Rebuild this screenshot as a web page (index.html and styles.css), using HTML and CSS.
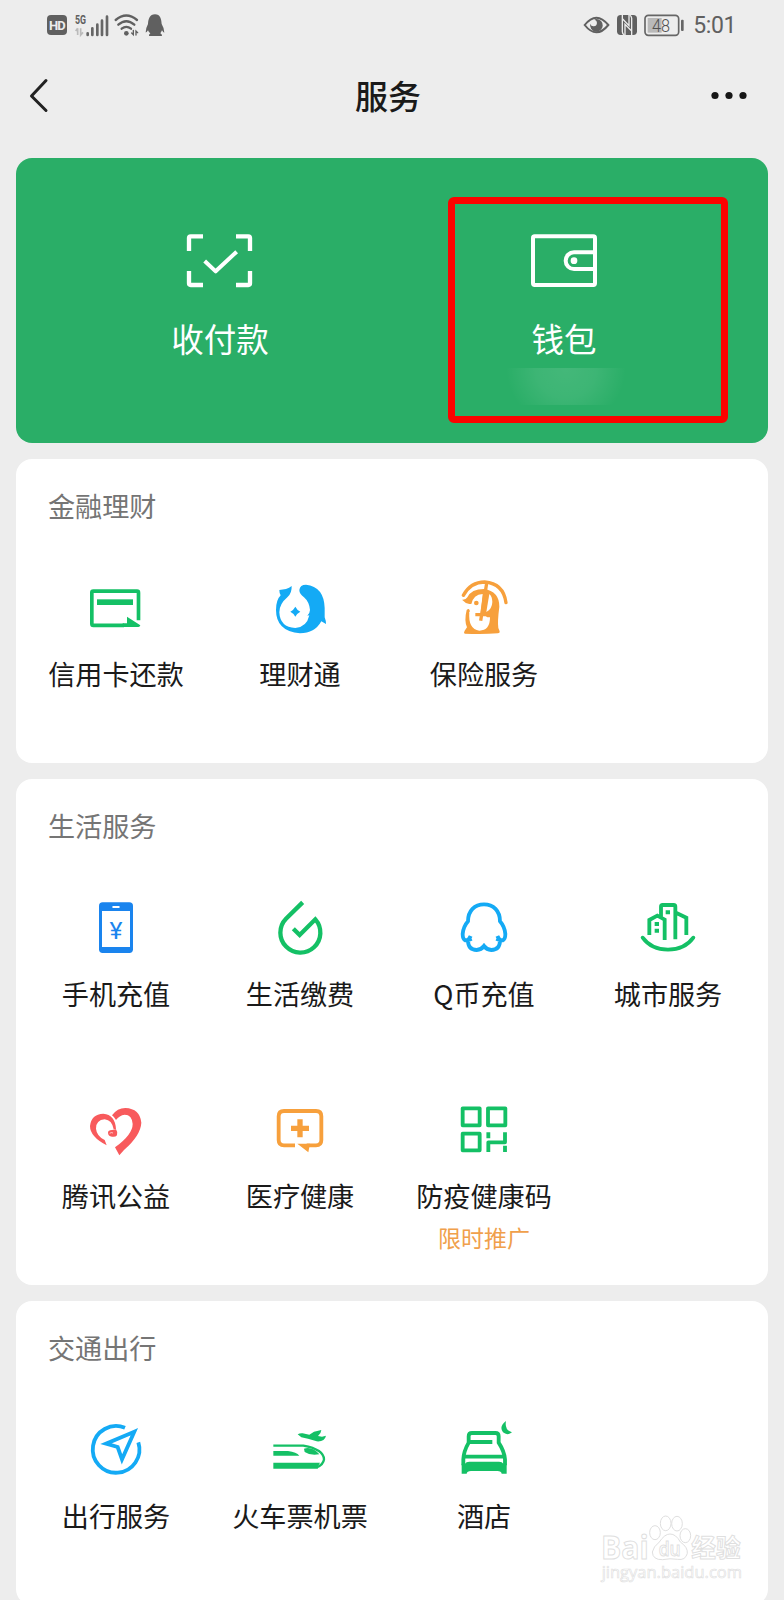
FILE: index.html
```html
<!DOCTYPE html>
<html lang="zh-CN">
<head>
  <meta charset="UTF-8">
  <title>服务</title>
  <link rel="stylesheet" href="styles.css">
</head>
<body>
  <div class="status">
    <div class="status-left">
      <span class="hd">HD</span>
      <svg class="signal" width="34" height="24" viewBox="0 0 102 72">
        <text x="0" y="32" font-size="36" textLength="33" lengthAdjust="spacingAndGlyphs" class="net">5G</text>
        <path d="M8 46 V66 M8 46 L2 54 M17 46 V66 L24 58" stroke="#bbb" stroke-width="5" fill="none"/>
        <path d="M38 61 V66 M52 46 V66 M67 35 V66 M81 23 V66 M96 11 V66" stroke="#666" stroke-width="8" stroke-linecap="round"/>
      </svg>
      <svg class="wifi" width="26" height="24" viewBox="0 0 78 72" fill="none" stroke="#606060" stroke-width="7" stroke-linecap="round">
        <path d="M5 21 Q37 -6 69 21 M13 35 Q37 14 61 35 M23 47 Q37 36 51 47"/>
        <circle cx="37" cy="61" r="7" fill="#606060" stroke="none"/>
        <path d="M58 52 V65 L53 60 M66 66 V54 L71 59" stroke-width="4"/>
      </svg>
      <svg class="qq" width="20" height="24" viewBox="0 0 60 72">
        <path d="M30 4 C46 4 49 18 50 33 Q58 46 58 59 Q55 59 51 52 Q49 57 46 61 Q52 64 51 69 H12 Q11 64 16 61 Q11 58 9 52 Q5 59 2 58 Q2 46 9 33 C10 18 14 4 30 4Z" fill="#606060"/>
      </svg>
    </div>
    <div class="status-right">
      <svg width="27" height="24" viewBox="0 0 81 72">
        <path d="M5 36 Q40 -8 76 36 Q40 80 5 36Z" fill="none" stroke="#606060" stroke-width="6"/>
        <path d="M40 18 A19 19 0 1 1 22 32 A10 10 0 1 0 34 20 Q36 18 40 18Z" fill="#606060"/>
      </svg>
      <svg width="20" height="24" viewBox="0 0 60 72">
        <rect x="0" y="6" width="60" height="60" rx="11" fill="#606060"/>
        <path d="M16 6 V56 Q16 62 22 66 M44 66 V16 Q44 10 38 6" fill="none" stroke="#ededed" stroke-width="4"/>
        <path d="M24 66 V34 L44 54 M36 6 V38 L17 18" fill="none" stroke="#ededed" stroke-width="4"/>
      </svg>
      <svg width="42" height="24" viewBox="0 0 126 72">
        <rect x="3" y="7" width="101" height="60" rx="10" fill="none" stroke="#666" stroke-width="5"/>
        <rect x="11" y="15" width="42" height="44" fill="#b9b9b9"/>
        <rect x="111" y="20" width="8" height="34" rx="3" fill="#666"/>
        <text x="24" y="56" font-size="54" textLength="54" lengthAdjust="spacingAndGlyphs" class="level">48</text>
      </svg>
      <span class="time">5:01</span>
    </div>
  </div>

  <header class="navbar">
    <svg width="20" height="36" viewBox="0 0 20 36" fill="none" stroke="#222" stroke-width="3" stroke-linecap="round" stroke-linejoin="round">
      <path d="M17 3.500 L2.500 19 L17 33.500"/>
    </svg>
    <h1>服务</h1>
    <svg class="more" width="36" height="8" viewBox="0 0 36 8" fill="#161616">
      <circle cx="4" cy="4.500" r="3.600"/><circle cx="18" cy="4.500" r="3.600"/><circle cx="32" cy="4.500" r="3.600"/>
    </svg>
  </header>

  <main class="content">
    <section class="pay">
      <div class="pay-item">
        <svg width="68" height="56" viewBox="0 0 204 168" fill="none" stroke="#fff" stroke-width="13">
          <path d="M9 54 V15 Q9 10 14 10 H51 M150 10 H187 Q192 10 192 15 V54 M192 114 V151 Q192 156 187 156 H150 M51 156 H14 Q9 156 9 151 V114"/>
          <path d="M56 84 L89 115 L152 56" stroke-linejoin="round" stroke-width="12"/>
        </svg>
        <span>收付款</span>
      </div>
      <div class="pay-item">
        <svg width="68" height="56" viewBox="0 0 204 168" fill="none" stroke="#fff" stroke-width="12">
          <rect x="9" y="10" width="186" height="146" rx="5"/>
          <path d="M195 58 H132 A25 25 0 0 0 132 108 H195"/>
          <circle cx="132" cy="83" r="10" fill="#fff" stroke="none"/>
        </svg>
        <span>钱包</span>
        <div class="balance"></div>
      </div>
      <div class="highlight"></div>
    </section>

    <section class="card">
      <h2>金融理财</h2>
      <div class="grid">
        <div class="item">
          <svg class="icon green" viewBox="0 0 168 168">
            <path d="M108 136 H16 Q11.500 136 11.500 131 V38 Q11.500 33.500 16 33.500 H147 Q151.500 33.500 151.500 38 V121" fill="none" stroke="currentColor" stroke-width="11"/>
            <rect x="27" y="58" width="108" height="17"/>
            <path d="M117 110 L157 136 Q156 141 151 141 H104 V130 H117Z"/>
          </svg>
          <span>信用卡还款</span>
        </div>
        <div class="item">
          <svg class="icon blue" viewBox="0 0 168 168">
            <path d="M22 30 L42 27 Q52 24 59 18 Q60 40 46 52 Q22 72 22 97 Q24 142 70 144 Q104 142 112 106 L106 107 Q114 98 114 90 Q112 66 96 52 Q82 42 82 30 Q84 14 102 14 Q156 20 158 84 V112 Q162 122 162 132 L148 124 Q128 160 84 160 Q12 154 12 90 Q12 60 26 46 Q22 40 22 30Z"/>
            <path d="M70 80 Q75 90 85 95 Q75 100 70 110 Q65 100 55 95 Q65 90 70 80Z"/>
          </svg>
          <span>理财通</span>
        </div>
        <div class="item">
          <svg class="icon orange" viewBox="0 0 168 168">
            <path d="M22 46 Q44 6 86 6 Q142 10 150 68" fill="none" stroke="currentColor" stroke-width="10" stroke-linecap="round"/>
            <path d="M18 59 Q30 60 34 52 Q46 27 84 27 Q130 34 130 80 Q124 125 127 144 L131 154 Q132 160 126 160 Q78 164 26 161 Q22 158 26 152 L33 142 Q24 122 32 90 Q38 84 41 90 L40 72 Q28 70 18 59Z"/>
            <path d="M30 72 L46 72 Q52 44 80 42 L74 100 H41 V90 Q38 84 31 88Z" fill="#fff"/>
            <path d="M40 96 L76 98 L94 112 H102 Q102 152 70 152 Q36 148 40 96Z" fill="#fff"/>
            <path d="M100 42 L91 96 Q108 88 109 66 Q109 50 100 42Z" fill="#fff"/>
            <path d="M92 10 L74 122 M58 104 H92" fill="none" stroke="currentColor" stroke-width="10"/>
            <circle cx="61" cy="69" r="7"/>
          </svg>
          <span>保险服务</span>
        </div>
      </div>
    </section>

    <section class="card">
      <h2>生活服务</h2>
      <div class="grid">
        <div class="item">
          <svg class="icon phone" viewBox="0 0 168 168">
            <rect x="33" y="7" width="102" height="152" rx="11"/>
            <rect x="42" y="33" width="84" height="108" fill="#fff"/>
            <rect x="73" y="18" width="22" height="6" rx="2" fill="#fff"/>
            <text x="84" y="116" font-size="74" text-anchor="middle" class="yen">¥</text>
          </svg>
          <span>手机充值</span>
        </div>
        <div class="item">
          <svg class="icon green" viewBox="0 0 168 168">
            <path d="M92 7 L42 56 A60 60 0 1 0 130 58 L83 105 L64 86" fill="none" stroke="currentColor" stroke-width="13"/>
          </svg>
          <span>生活缴费</span>
        </div>
        <div class="item">
          <svg class="icon blue" viewBox="0 0 168 168" fill="none">
            <path class="line" d="M44 108 Q38 122 28 121 Q20 118 20 102 Q22 80 36 64 C36 32 56 13 84 13 C112 13 132 32 132 64 Q146 80 148 102 Q148 118 140 121 Q130 122 124 108 M47 116 L36 121 Q36 150 62 150 Q76 149 84 138 Q92 149 106 150 Q132 150 132 121 L121 116"/>
          </svg>
          <span>Q币充值</span>
        </div>
        <div class="item">
          <svg class="icon green" viewBox="0 0 168 168">
            <path class="line" d="M8 113 Q34 149 84 149 Q134 149 160 113" stroke-linecap="round"/>
            <path class="line" d="M28 105 V60 L52 47 L74 59 V120 M63 50 V20 Q63 15 68 15 H101 Q106 15 106 20 V118 M108 38 L139 53 V105"/>
            <path d="M77 31 H90 V43 H77Z M44 66 H57 V78 H44Z M44 86 H57 V98 H44Z"/>
          </svg>
          <span>城市服务</span>
        </div>
        <div class="item">
          <svg class="icon red" viewBox="0 0 168 168">
            <path d="M56 130 Q6 104 6 72 Q10 36 46 35 Q82 38 84 82 L77 82 Q72 54 50 52 Q24 54 24 80 Q26 102 50 114Z"/>
            <path d="M72 40 Q88 18 112 18 Q156 20 160 62 Q158 100 108 144 L94 160 L81 136 Q134 98 134 66 Q132 38 110 38 Q94 40 84 54 Q80 46 72 40Z"/>
            <path d="M60 92 Q60 84 72 84 L84 82 Q90 90 87 100 Q82 106 72 104 Q60 102 60 92Z"/>
            <path d="M65 94 Q70 90 75 93" fill="none" stroke="#fff" stroke-width="2"/>
          </svg>
          <span>腾讯公益</span>
        </div>
        <div class="item">
          <svg class="icon orange" viewBox="0 0 168 168">
            <path class="line" d="M69 130 H36 Q20 130 20 114 V43 Q20 27 36 27 H132 Q148 27 148 43 V114 Q148 130 132 130 H104"/>
            <path d="M76 125 H114 L109 151Z M57 71 H76 V52 H92 V71 H111 V87 H92 V106 H76 V87 H57Z"/>
          </svg>
          <span>医疗健康</span>
        </div>
        <div class="item">
          <svg class="icon green" viewBox="0 0 168 168">
            <g class="line" stroke-linejoin="round">
              <rect x="20" y="19" width="51" height="51"/>
              <rect x="96" y="19" width="52" height="51"/>
              <rect x="20" y="95" width="51" height="50"/>
              <path d="M97 91 V109 M97 150 V121 H147 V91 M147 131 V150"/>
            </g>
          </svg>
          <span>防疫健康码</span>
          <em>限时推广</em>
        </div>
      </div>
    </section>

    <section class="card">
      <h2>交通出行</h2>
      <div class="grid">
        <div class="item">
          <svg class="icon blue" viewBox="0 0 168 168">
            <path class="line" d="M111 17.500 A70 70 0 1 0 151 61 M139 29 L54 65 L89 75 L102 112Z"/>
          </svg>
          <span>出行服务</span>
        </div>
        <div class="item">
          <svg class="icon green" viewBox="0 0 168 168">
            <path d="M4 71 H94 Q155 82 156 112 Q154 128 134 136" fill="none" stroke="currentColor" stroke-width="7"/>
            <path d="M4 122 H144 Q138 130 137 140 H4Z M4 87 H48 Q74 90 82 101 H4Z M96 80 Q120 72 142 97 Q116 102 98 90Z"/>
            <path d="M77 37 Q84 33 92 34 L112 38 L126 29 L148 24 Q148 32 138 42 L150 44 L162 41 Q158 60 134 58 L108 50 L88 46Z"/>
          </svg>
          <span>火车票机票</span>
        </div>
        <div class="item">
          <svg class="icon green" viewBox="0 0 168 168">
            <path class="line" d="M22 130 V112 Q23 88 38 62 V43 Q38 33 48 33 H118 Q128 33 128 43 V62 Q145 88 147 112 V130 M38 60 H109 M24 104 H145"/>
            <path d="M17 155 V125 H27 Q30 119 40 119 H129 Q139 119 142 125 H152 V155 H137 Q136 147 124 147 H45 Q33 147 32 155Z"/>
            <path d="M150 -3 Q145 24 168 31 Q154 42 141 31 Q128 14 150 -3Z"/>
          </svg>
          <span>酒店</span>
        </div>
      </div>
    </section>
  </main>

  <svg class="watermark" width="150" height="76" viewBox="0 0 450 228">
    <text x="15" y="148" font-size="96" font-weight="700" textLength="143" lengthAdjust="spacingAndGlyphs">Bai</text>
    <ellipse cx="177" cy="68" rx="16" ry="21"/>
    <ellipse cx="209" cy="40" rx="16" ry="22"/>
    <ellipse cx="243" cy="41" rx="16" ry="22"/>
    <ellipse cx="268" cy="77" rx="16" ry="21"/>
    <path d="M222 72 Q240 72 253 96 Q276 112 274 130 Q268 152 245 148 Q222 144 200 149 Q170 150 169 126 Q172 110 190 96 Q206 72 222 72Z"/>
    <text x="188" y="138" font-size="60" font-weight="600" textLength="66" lengthAdjust="spacingAndGlyphs">du</text>
    <text x="286" y="142" font-size="74" font-weight="700" textLength="148" lengthAdjust="spacingAndGlyphs">经验</text>
    <text x="17" y="203" font-size="50" textLength="421" lengthAdjust="spacingAndGlyphs" class="url">jingyan.baidu.com</text>
  </svg>
</body>
</html>
```

FILE: styles.css
```css
* { box-sizing: border-box; }
body { margin: 0; height: 1600px; overflow: hidden; position: relative; background: #ededed; color: #1a1a1a; font-family: "Noto Sans CJK SC", sans-serif; }
svg { display: block; flex: none; overflow: visible; }
h1, h2 { margin: 0; font-weight: 400; }

/* 状态栏 */
.status { height: 48px; padding: 1px 48px 0 47px; display: flex; justify-content: space-between; color: #606060; }
.status-left, .status-right { display: flex; align-items: center; }
.hd { width: 20px; height: 20px; border-radius: 4px; background: #606060; color: #ededed; font: 700 13px/21px Roboto, sans-serif; letter-spacing: -0.8px; text-align: center; }
.signal { margin-left: 8px; }
.wifi { margin-left: 5px; }
.qq { margin-left: 5px; }
.net { font-family: Roboto, sans-serif; font-weight: 700; fill: #606060; }
.level { font-family: Roboto, sans-serif; font-weight: 300; fill: #505050; }
.status-right { gap: 7px; }
.time { font: 400 23px/46px Roboto, sans-serif; letter-spacing: -0.4px; padding-top: 2px; }

.navbar { height: 94px; padding: 0 37px 0 29px; display: grid; grid-template-columns: 1fr auto 1fr; align-items: center; }
.navbar h1 { font-size: 33px; line-height: 48px; font-weight: 500; }
.more { justify-self: end; }

.content { padding: 16px; display: flex; flex-direction: column; gap: 16px; }

.pay { position: relative; height: 285px; padding: 75px 32px 0; border-radius: 16px; background: #2aae67; color: #fff; display: flex; }
.pay-item { width: 344px; display: flex; flex-direction: column; align-items: center; font-size: 32.5px; line-height: 48px; }
.pay-item span { margin-top: 25px; }
.balance { width: 126px; height: 37px; margin: 6px 0 0 3px; background: radial-gradient(60px 60px at 50% 0, rgba(255,255,255,.12), rgba(255,255,255,.09) 50%, rgba(255,255,255,0)); }
.highlight { position: absolute; left: 432px; top: 39px; width: 280px; height: 226px; border: 7px solid #fb0300; border-radius: 6px; }

.card { padding: 27px 8px 0; border-radius: 16px; background: #fff; }
.card h2 { padding-left: 24px; font-size: 27.1px; line-height: 40px; color: #757575; }
.grid { margin-top: 54px; display: grid; grid-template-columns: repeat(4, 184px); grid-auto-rows: 183px; row-gap: 19px; }
.item { display: flex; flex-direction: column; align-items: center; font-size: 27.1px; line-height: 38px; white-space: nowrap; }
.item span { margin-top: 19px; }
.item em { margin-top: 7px; font-style: normal; font-size: 23px; line-height: 30px; color: #f0a04b; }

.icon { width: 56px; height: 56px; fill: currentColor; }
.line { fill: none; stroke: currentColor; stroke-width: 11.5; }
.green { color: #14c065; }
.blue { color: #14aaf5; }
.orange { color: #f7a03c; }
.red { color: #f85a5c; }
.phone { color: #1a84ee; }
.yen { font-family: Roboto, sans-serif; font-weight: 400; }

.watermark { position: absolute; left: 596px; top: 1510px; fill: #fff; stroke: #dfdfdf; stroke-width: 3; font-family: "Open Sans", "Noto Sans CJK SC", sans-serif; }
.url { stroke-width: 2; }
```
